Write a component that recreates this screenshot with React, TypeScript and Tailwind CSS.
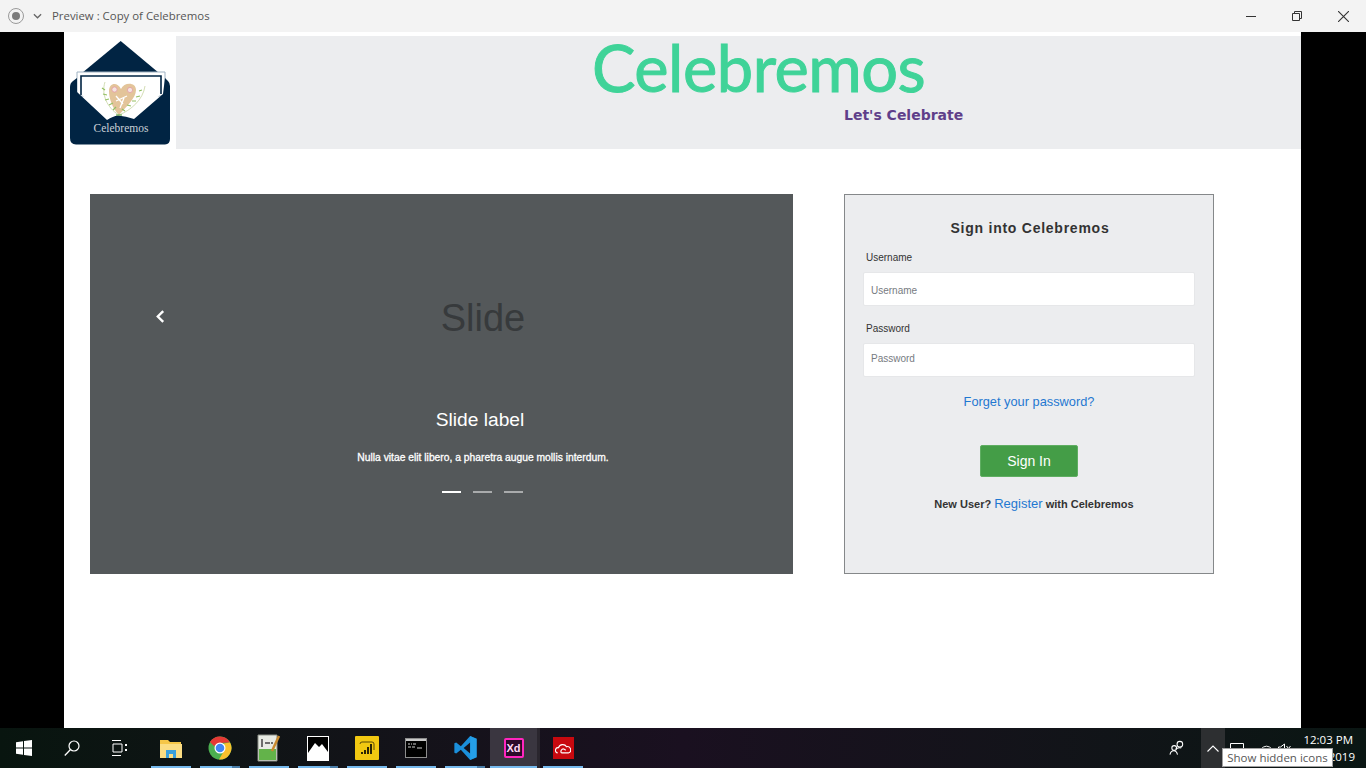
const tasks = [
  { id: "explorer", box: "mr-[9px] w-[40px]" },
  { id: "chrome", box: "mr-[9px] w-[40px]", split: true },
  { id: "notepad", box: "mr-[9px] w-[40px]" },
  { id: "photos", box: "mr-[9px] w-[40px]", split: true },
  { id: "powerbi", box: "mr-[9px] w-[40px]" },
  { id: "cmd", box: "mr-[9px] w-[40px]" },
  { id: "vscode", box: "mr-[5px] w-[40px]", split: true },
  { id: "xd", box: "mr-[3px] w-[50px] bg-[#3a3640] border-r-[3px] border-[#2a262e]" },
  { id: "cc", box: "w-[40px]" },
];

function Logo() {
  return (
    <svg viewBox="70 41 102 105" className="w-[102px] h-[105px] shrink-0">
      <path d="M120.7 41 L159 73 L82 73 Z" fill="#012443" />
      <path d="M77 72 H165 V96 H77 Z" fill="#fff" stroke="#9fb2c2" strokeWidth="1" />
      <path d="M80 75 H162 V93 L134 119 L120 116 L107 120 L81 94 Z" fill="#fff" />
      <path d="M81 95 V76 H161 V94" fill="none" stroke="#012443" strokeWidth="1.6" />
      <path d="M165 78 L168 81 Q170 83 170 86 V139 Q170 144 165 144.500 H76 Q70 144 70 138 V87 Q70 83 73 81 L77 78 V92 L107 120 Q113 116 118 115.500 Q126 116 134 119 L163 94 Z" fill="#012443" />
      <path d="M119 115 C112 108 109 98 109 91 C109 83 117 81 121 89 C124 82 136 82 136 90 C136 98 126 107 119 115 Z" fill="#e3c49a" />
      <circle cx="114.500" cy="89.500" r="2.600" fill="#f3e4e0" stroke="#e39aa5" strokeWidth="0.800" />
      <circle cx="130" cy="90" r="2.600" fill="#f3e4e0" stroke="#e39aa5" strokeWidth="0.800" />
      <path d="M116 101 L127 96 M120 108 L124 98 M116 96 L123 104" stroke="#fff" strokeWidth="1.300" fill="none" />
      <path d="M105 82 C101 94 107 108 119 115 C131 110 143 100 145 86" fill="none" stroke="#c8d4a2" strokeWidth="0.800" />
      <path d="M102 88 L105 90 M103 94 L107 95 M105 100 L109 99 M109 105 L113 103 M113 110 L116 107 M142 90 L139 91 M140 96 L136 97 M136 101 L132 101 M131 106 L127 105 M125 111 L122 109" stroke="#93bf63" strokeWidth="1.200" />
      <path d="M116 115 H122" stroke="#4f9a2f" strokeWidth="1" />
      <text x="121" y="132" textAnchor="middle" fontFamily="Liberation Serif, serif" fontSize="11.500" fill="#c9d0d6">
        Celebremos
      </text>
    </svg>
  );
}

function TaskIcon({ id }: { id: string }) {
  if (id === "explorer")
    return (
      <svg viewBox="0 0 24 24" className="w-[24px] h-[24px]">
        <path d="M1 4 H9 L11 6 H22 V21 H1 Z" fill="#f5c648" />
        <path d="M1 8 H23 V22 H1 Z" fill="#fbdd83" />
        <path d="M7 22 V14 H17 V22 H14 V18 H10 V22 Z" fill="#3aa0dc" />
      </svg>
    );
  if (id === "chrome")
    return (
      <svg viewBox="0 0 24 24" className="w-[24px] h-[24px]">
        <circle cx="12" cy="12" r="11.500" fill="#4caf50" />
        <path d="M12 .5 A11.500 11.500 0 0 1 22 6.500 L12 7 L6 10 L2 6 A11.500 11.500 0 0 1 12 .5 Z" fill="#e53935" />
        <path d="M22 6.500 A11.500 11.500 0 0 1 11 23.500 L16.500 14 L16 7.500 Z" fill="#fbc02d" />
        <circle cx="12" cy="12" r="5.500" fill="#fff" />
        <circle cx="12" cy="12" r="4.300" fill="#4285f4" />
      </svg>
    );
  if (id === "notepad")
    return (
      <svg viewBox="0 0 24 28" className="w-[24px] h-[28px]">
        <path d="M1 1 H20 V27 H1 Z" fill="#e8ebe4" stroke="#8a8f86" />
        <path d="M2 15 H19 V26 H2 Z" fill="#63b34a" />
        <path d="M5 5 V13 M8 9 H13 M14 9 H16" stroke="#444" strokeWidth="1.500" />
        <path d="M15 17 L22 2" stroke="#c98a2e" strokeWidth="2.500" />
      </svg>
    );
  if (id === "photos")
    return (
      <svg viewBox="0 0 22 25" className="w-[22px] h-[25px]">
        <rect x="0.500" y="0.500" width="21" height="24" fill="#000" stroke="#fff" />
        <path d="M1 24 V17 L8 7 L12 11 L15 8 L21 16 V24 Z" fill="#fff" />
      </svg>
    );
  if (id === "powerbi")
    return (
      <div className="w-[24px] h-[24px] bg-[#f2c811] rounded-[1px] flex items-center justify-center">
        <svg viewBox="0 0 16 14" className="w-[16px] h-[14px]">
          <path d="M1 3 Q1 1 3 1 H13 Q15 1 15 3 V9" fill="none" stroke="#5b4a07" strokeWidth="1" />
          <path d="M5 13 V9 H7 V13 Z M8 13 V6 H10 V13 Z M11 13 V3 H13 V13 Z M2 13 V11 H4 V13 Z" fill="#2b2504" />
        </svg>
      </div>
    );
  if (id === "cmd")
    return (
      <div className="w-[22px] h-[20px] bg-black border border-[#8d8d8d] flex flex-col">
        <div className="h-[2px] bg-[#c9c9c9]" />
        <svg viewBox="0 0 20 16" className="w-[20px] h-[16px]">
          <path d="M2 3 H4 M5 3 H6 M7 3 H10 M2 6 H5 M6 6 H9 M11 7 H16" stroke="#cfcfcf" strokeWidth="1" />
        </svg>
      </div>
    );
  if (id === "vscode")
    return (
      <svg viewBox="0 0 24 28" className="w-[25px] h-[26px]">
        <path d="M17 1 L24 4 V24 L17 27 L7 16 L2 20 L0 19 V9 L2 8 L7 12 Z M17 8 L10 14 L17 20 Z" fill="#1b8fdb" />
        <path d="M17 1 L24 4 V24 L17 27 Z" fill="#2aa5ee" fillOpacity="0.700" />
      </svg>
    );
  if (id === "xd")
    return (
      <div className="w-[20px] h-[20px] bg-[#2b0a2a] border-2 border-[#ff26be] rounded-[2px] flex items-center justify-center text-[11px] font-bold leading-none text-[#ffd9f5] font-['Liberation_Sans',sans-serif]">
        Xd
      </div>
    );
  return (
    <div className="w-[21px] h-[22px] bg-[#c8090f] flex items-center justify-center">
      <svg viewBox="0 0 18 14" className="w-[16px] h-[13px]">
        <path d="M3 12 A3 3 0 0 1 4 6 A5 5 0 0 1 13 5 A3.500 3.500 0 0 1 15 12 H8 Q6 12 7 9 Q9 6 12 9" fill="none" stroke="#fff" strokeWidth="1.300" />
      </svg>
    </div>
  );
}

export default function App() {
  return (
    <div className="relative w-[1366px] h-[768px] overflow-hidden flex flex-col bg-black font-['Liberation_Sans',sans-serif]">
      {/* window title bar */}
      <div className="h-8 bg-[#f3f3f3] flex items-center shrink-0 font-['Open_Sans',sans-serif]">
        <div className="w-[16px] h-[16px] ml-[8px] rounded-full border border-[#9a9a9a] flex items-center justify-center">
          <div className="w-[8px] h-[8px] rounded-full bg-[#7b7b7b]" />
        </div>
        <svg viewBox="0 0 10 6" className="w-[9px] h-[6px] ml-[9px]">
          <path d="M1 1 L5 5 L9 1" fill="none" stroke="#666" strokeWidth="1.400" />
        </svg>
        <span className="ml-[10px] text-[11.400px] text-[#555]">Preview : Copy of Celebremos</span>
        <div className="ml-auto flex items-center">
          <div className="w-[46px] h-8 flex items-center justify-center">
            <div className="w-[10px] h-px bg-[#333]" />
          </div>
          <div className="w-[46px] h-8 flex items-center justify-center">
            <svg viewBox="0 0 10 10" className="w-[10px] h-[10px]">
              <path d="M0.500 2.500 H7.500 V9.500 H0.500 Z M2.500 2.500 V0.500 H9.500 V7.500 H7.500" fill="none" stroke="#333" />
            </svg>
          </div>
          <div className="w-[46px] h-8 flex items-center justify-center">
            <svg viewBox="0 0 10 10" className="w-[11px] h-[11px]">
              <path d="M0 0 L10 10 M10 0 L0 10" fill="none" stroke="#333" strokeWidth="1" />
            </svg>
          </div>
        </div>
      </div>

      {/* preview area */}
      <div className="flex-1 flex justify-start pl-[64px]">
        <div className="w-[1237px] h-full bg-white flex flex-col">
          <header className="h-[113px] mt-1 flex">
            <div className="w-[112px] pl-[6px] pt-[5px] bg-white">
              <Logo />
            </div>
            <div className="flex-1 bg-[#ecedef] flex flex-col">
              <div className="pl-[416px] h-[72px] text-[65px] leading-[62px] tracking-[-0.500px] text-[#3fd398] [-webkit-text-stroke:1px_#3fd398] font-['Lato',sans-serif] whitespace-nowrap">
                Celebremos
              </div>
              <div className="pl-[668px] text-[14px] leading-[14px] font-bold text-[#5f3f8a] font-['DejaVu_Sans',sans-serif] whitespace-nowrap">
                Let's Celebrate
              </div>
            </div>
          </header>

          <main className="flex pl-[26px] pt-[45px] gap-[51px]">
            <section className="relative w-[703px] h-[380px] bg-[#54585a] flex flex-col items-center pl-[83px] pt-[101px]">
              <svg viewBox="0 0 8 12" className="absolute left-[66px] top-[116px] w-[9px] h-[13px]">
                <path d="M6.500 1 L1.500 6 L6.500 11" fill="none" stroke="#fff" strokeWidth="2.200" />
              </svg>
              <div className="h-[46px] text-[38px] leading-[46px] text-[#373a3c]">Slide</div>
              <div className="mt-[67px] mr-[6px] text-[19.2px] leading-[24px] text-white">Slide label</div>
              <div className="mt-[19px] text-[10.300px] leading-[14px] text-white [-webkit-text-stroke:0.3px_white] whitespace-nowrap">
                Nulla vitae elit libero, a pharetra augue mollis interdum.
              </div>
              <div className="mt-[26px] mr-[2px] flex gap-[12px]">
                <div className="w-[19px] h-[2px] bg-white" />
                <div className="w-[19px] h-[2px] bg-[#a9abac]" />
                <div className="w-[19px] h-[2px] bg-[#a9abac]" />
              </div>
            </section>

            <section className="w-[370px] h-[380px] bg-[#ecedef] border border-[#85888a] px-[18px] flex flex-col">
              <h1 className="mt-[24px] pl-[2px] text-center text-[14px] leading-[18px] font-bold tracking-[0.750px] text-[#333]">
                Sign into Celebremos
              </h1>
              <label className="mt-[14px] ml-[3px] text-[10px] leading-[14px] text-[#333]">Username</label>
              <div className="mt-[7px] h-[34px] bg-white border border-[#e6e7e9] rounded-[2px] px-[7px] pt-[2px] flex items-center text-[10px] text-[#777b7f]">
                Username
              </div>
              <label className="mt-[16px] ml-[3px] text-[10px] leading-[14px] text-[#333]">Password</label>
              <div className="mt-[7px] h-[34px] bg-white border border-[#e6e7e9] rounded-[2px] px-[7px] pb-[4px] flex items-center text-[10px] text-[#777b7f]">
                Password
              </div>
              <a className="mt-[17px] text-center text-[12.800px] leading-[16px] text-[#1f78d1]">Forget your password?</a>
              <button className="mt-[35px] mx-auto w-[98px] h-[32px] bg-[#449d47] border border-[#5fae62] rounded-[2px] text-[14px] text-white">
                Sign In
              </button>
              <p className="mt-[19px] pl-[10px] text-center text-[11px] leading-[16px] font-bold text-[#333]">
                New User? <a className="text-[13px] font-normal text-[#1f78d1]">Register</a> with Celebremos
              </p>
            </section>
          </main>
        </div>
      </div>

      {/* windows taskbar */}
      <div className="h-10 shrink-0 flex items-center bg-gradient-to-r from-[#08150f] via-[#1a1020] to-[#0a1613]">
        <div className="w-[48px] flex justify-center">
          <svg viewBox="0 0 16 16" className="w-[16px] h-[16px]">
            <path d="M0 2.300 L7 1.300 V7.500 H0 Z M8 1.100 L16 0 V7.500 H8 Z M0 8.500 H7 V14.700 L0 13.700 Z M8 8.500 H16 V16 L8 14.900 Z" fill="#fff" />
          </svg>
        </div>
        <div className="w-[48px] flex justify-center">
          <svg viewBox="0 0 16 16" className="w-[16px] h-[16px]">
            <circle cx="10" cy="6" r="5" fill="none" stroke="#fff" strokeWidth="1.200" />
            <path d="M6.500 9.500 L0.800 15.500" stroke="#fff" strokeWidth="1.300" />
          </svg>
        </div>
        <div className="w-[48px] flex justify-center">
          <svg viewBox="0 0 16 16" className="w-[16px] h-[16px]">
            <path d="M0 .5 H9 M0 15.500 H9 M1 4 H10 V12 H1 Z" fill="none" stroke="#fff" strokeWidth="1" />
            <path d="M13 4 H15 V6 H13 Z M13 9 H15 V11 H13 Z" fill="#fff" />
          </svg>
        </div>
        <div className="flex pl-[7px] h-10">
          {tasks.map((t) => (
            <div key={t.id} className={`relative h-10 flex items-center justify-center ${t.box}`}>
              <TaskIcon id={t.id} />
              <div className="absolute bottom-0 left-0 right-0 h-[2px] bg-[#76b9ed]" />
              {t.split && <div className="absolute bottom-0 right-0 w-[8px] h-[2px] bg-[#4a7da8]" />}
            </div>
          ))}
        </div>
        <div className="ml-auto flex items-center h-10">
          <svg viewBox="0 0 18 16" className="w-[17px] h-[16px] mr-[15px]">
            <circle cx="11.500" cy="4" r="3" fill="none" stroke="#fff" strokeWidth="1.100" />
            <circle cx="5.500" cy="8" r="2.500" fill="none" stroke="#fff" strokeWidth="1.100" />
            <path d="M7 9 Q11 7 13 8 M1 15 Q2 11 5 11 Q8 11 9 15" fill="none" stroke="#fff" strokeWidth="1.100" />
          </svg>
          <div className="w-[24px] h-10 bg-[#2d2f31] flex items-center justify-center">
            <svg viewBox="0 0 12 7" className="w-[12px] h-[7px]">
              <path d="M.5 6.500 L6 1 L11.500 6.500" fill="none" stroke="#fff" strokeWidth="1.100" />
            </svg>
          </div>
          <div className="w-[76px] flex items-center pl-[5px]">
            <svg viewBox="0 0 14 11" className="w-[14px] h-[11px]">
              <path d="M.5 .5 H13.500 V10.500 H.5 Z" fill="none" stroke="#fff" />
            </svg>
            <svg viewBox="0 0 14 11" className="ml-[16px] w-[13px] h-[11px]">
              <path d="M1 6 Q7 0 13 6 M4 8 Q7 5 10 8" fill="none" stroke="#fff" />
            </svg>
            <svg viewBox="0 0 14 11" className="ml-[4px] w-[15px] h-[11px]">
              <path d="M1 4 H3 L7 1 V10 L3 7 H1 Z M9 3 L13 8 M13 3 L9 8" fill="none" stroke="#fff" />
            </svg>
          </div>
          <div className="w-[65px] pr-[13px] flex flex-col items-end text-[11.500px] leading-[17px] text-white font-['Open_Sans',sans-serif]">
            <span>12:03 PM</span>
            <span className="mr-[-2px]">2019</span>
          </div>
        </div>
      </div>

      {/* tooltip over the tray */}
      <div className="absolute left-[1222px] top-[748px] w-[111px] h-[19px] bg-white border border-[#a0a0a0] flex items-center justify-center text-[11.500px] text-[#575757] font-['Open_Sans',sans-serif] whitespace-nowrap">
        Show hidden icons
      </div>
    </div>
  );
}
